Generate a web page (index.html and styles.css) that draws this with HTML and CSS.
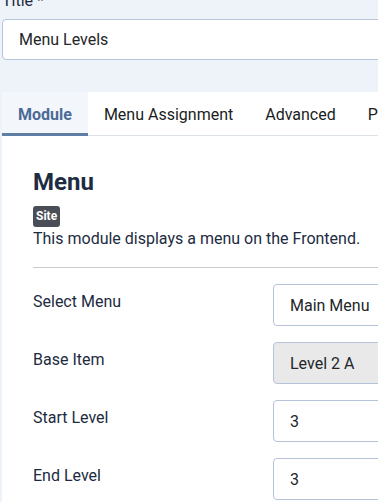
FILE: index.html
```html
<!DOCTYPE html>
<html lang="en">
<head>
<meta charset="utf-8">
<title>Menu Levels</title>
<link rel="stylesheet" href="styles.css">
</head>
<body>
<div class="page">
  <div class="title-field">
    <label class="title-label">Title *</label>
    <div class="text-input">Menu Levels</div>
  </div>

  <div class="tabs">
    <div class="tab active">Module</div>
    <div class="tab">Menu Assignment</div>
    <div class="tab">Advanced</div>
    <div class="tab">Permissions</div>
  </div>

  <div class="panel">
    <h2 class="module-title">Menu</h2>
    <span class="badge">Site</span>
    <p class="desc">This module displays a menu on the Frontend.</p>
    <hr class="divider">

    <div class="form-grid">
      <div class="label">Select Menu</div>
      <div class="control">Main Menu</div>

      <div class="label">Base Item</div>
      <div class="control disabled">Level 2 A</div>

      <div class="label">Start Level</div>
      <div class="control">3</div>

      <div class="label">End Level</div>
      <div class="control">3</div>
    </div>
  </div>
</div>
</body>
</html>
```

FILE: styles.css
```css
html, body {
  margin: 0;
  padding: 0;
  overflow: hidden;
}

body {
  background: #eef2f9;
  font-family: Roboto, "Liberation Sans", sans-serif;
  font-size: 16px;
  color: #1c2b41;
  width: 378px;
  height: 502px;
}

.page {
  padding-left: 2px;
  width: 460px;
}

.title-field {
  margin-top: -11px;
}

.title-label {
  display: block;
  line-height: 24px;
  margin-bottom: 6px;
  color: #1c2b41;
}

.text-input {
  box-sizing: border-box;
  height: 41px;
  border: 1px solid #b6c4da;
  border-radius: 4px;
  background: #fff;
  padding: 0 16px;
  display: flex;
  align-items: center;
  color: #22262a;
}

.tabs {
  margin-top: 32px;
  display: flex;
  background: #fff;
  height: 44px;
  box-shadow: inset 0 -1px 0 #dde2e8;
}

.tab {
  padding: 0 16px;
  display: flex;
  align-items: center;
  white-space: nowrap;
  color: #1a1d22;
}

.tab.active {
  background: #f3f6fa;
  color: #4b6a97;
  font-weight: 700;
  box-shadow: inset 0 -3px 0 #5f7ea6;
}

.panel {
  background: #fff;
  padding: 32px 0 40px 31px;
  min-height: 400px;
}

.module-title {
  margin: 0;
  font-size: 24px;
  line-height: 29px;
  font-weight: 700;
  color: #1e2c42;
}

.badge {
  display: inline-block;
  margin-top: 9px;
  background: #4a4f57;
  color: #fff;
  font-size: 12px;
  font-weight: 700;
  line-height: 21px;
  padding: 0 3px;
  border-radius: 3px;
  vertical-align: top;
}

.desc {
  margin: 0;
  line-height: 24px;
  color: #1c2b41;
}

.divider {
  border: 0;
  border-top: 1px solid #cbcbcb;
  margin: 16px 0 16px 0;
}

.form-grid {
  display: grid;
  grid-template-columns: 240px 1fr;
  row-gap: 16px;
}

.label {
  padding-top: 6px;
  line-height: 24px;
  color: #1c2b41;
}

.control {
  box-sizing: border-box;
  height: 42px;
  border: 1px solid #b6c4da;
  border-radius: 4px;
  background: #fff;
  padding: 0 16px;
  display: flex;
  align-items: center;
  color: #22262a;
}

.control.disabled {
  background: #e9e9ea;
}
```
